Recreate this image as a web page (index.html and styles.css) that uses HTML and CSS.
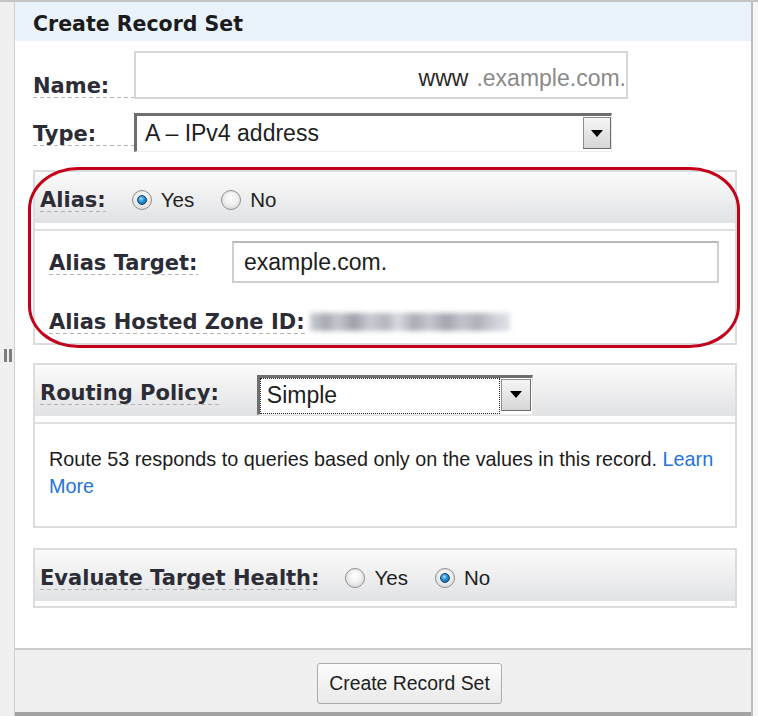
FILE: index.html
```html
<!DOCTYPE html>
<html>
<head>
<meta charset="utf-8">
<link rel="stylesheet" href="styles.css">
</head>
<body>
<div class="frame">
  <div class="gutter"><div class="grip"><span></span><span></span></div></div>
  <div class="panel">
    <div class="title">Create Record Set</div>
    <div class="main">
      <div class="field-row name-row">
        <span class="lbl">Name:</span>
        <div class="name-input"><span class="host">www</span><span class="suffix">.example.com.</span></div>
      </div>
      <div class="field-row type-row">
        <span class="lbl">Type:</span>
        <div class="select type-select"><span class="select-text">A – IPv4 address</span><span class="select-btn"><span class="arrow"></span></span></div>
      </div>

      <div class="sec alias-sec">
        <div class="sec-head">
          <span class="lbl">Alias:</span>
          <span class="radio checked"></span><span class="opt">Yes</span>
          <span class="radio"></span><span class="opt">No</span>
        </div>
        <div class="sec-body alias-body">
          <div class="target-row">
            <span class="lbl target-lbl">Alias Target:</span>
            <div class="target-input">example.com.</div>
          </div>
          <div class="zone-row">
            <span class="lbl">Alias Hosted Zone ID:</span>
            <span class="blur"></span>
          </div>
        </div>
        <div class="highlight"></div>
      </div>

      <div class="sec routing-sec">
        <div class="sec-head">
          <span class="lbl">Routing Policy:</span>
          <div class="select routing-select"><span class="select-text focus">Simple</span><span class="select-btn"><span class="arrow"></span></span></div>
        </div>
        <div class="sec-body routing-body">
          <p class="desc">Route 53 responds to queries based only on the values in this record. <a class="link" href="#">Learn</a> <a class="link" href="#">More</a></p>
        </div>
      </div>

      <div class="sec health-sec">
        <div class="sec-head">
          <span class="lbl">Evaluate Target Health:</span>
          <span class="radio"></span><span class="opt">Yes</span>
          <span class="radio checked"></span><span class="opt">No</span>
        </div>
        <div class="sec-tail"></div>
      </div>
    </div>
    <div class="footer"><button class="btn">Create Record Set</button></div>
  </div>
  <div class="edge"></div>
</div>
</body>
</html>
```

FILE: styles.css
```css
html, body {
  margin: 0;
  padding: 0;
}
body {
  background: #f2f2f2;
  font-family: "Liberation Sans", Arial, sans-serif;
  color: #222;
}
.frame {
  width: 758px;
  height: 716px;
  box-sizing: border-box;
  border-top: 2px solid #c4c4c4;
  display: flex;
  overflow: hidden;
}
.gutter {
  width: 14px;
  flex-shrink: 0;
  background: #f0f0f0;
  padding-top: 347px;
  box-sizing: border-box;
}
.grip {
  display: flex;
  gap: 2px;
  padding-left: 4px;
}
.grip span {
  width: 3px;
  height: 13px;
  background: #7d7d7d;
}
.panel {
  width: 739px;
  flex-shrink: 0;
  box-sizing: border-box;
  border-left: 1px solid #cfcfcf;
  border-right: 2px solid #bdbdbd;
  background: #fff;
  display: flex;
  flex-direction: column;
}
.edge {
  flex: 1;
  background: #f6f6f6;
}
.title {
  height: 39px;
  box-sizing: border-box;
  padding: 5px 0 0 18px;
  background: #eaf2fc;
  display: flex;
  align-items: center;
  font-family: "DejaVu Sans", Verdana, sans-serif;
  font-weight: bold;
  font-size: 20.5px;
  color: #1b1b1b;
}
.main {
  padding: 10px 0 0 18px;
}
.lbl {
  display: inline-block;
  font-family: "DejaVu Sans", Verdana, sans-serif;
  font-weight: bold;
  font-size: 21px;
  line-height: 23px;
  color: #2c2c36;
  background-image: repeating-linear-gradient(to right, #b4b4b4 0 4px, transparent 4px 7px);
  background-size: 100% 1px;
  background-position: left bottom;
  background-repeat: no-repeat;
  white-space: nowrap;
}
.field-row {
  display: grid;
  grid-template-columns: 101px auto;
}
.name-row {
  align-items: end;
}
.name-row .lbl {
  margin-bottom: 1px;
}
.name-input {
  width: 494px;
  height: 48px;
  box-sizing: border-box;
  border: 2px solid #d6d6d6;
  display: flex;
  justify-content: flex-end;
  align-items: center;
  padding: 6px 0 0 0;
  font-size: 23px;
}
.host {
  color: #2a2a2a;
}
.suffix {
  color: #8a8a8a;
  margin-left: 8px;
}
.type-row {
  margin-top: 14px;
  align-items: center;
}
.type-row .lbl {
  margin-top: 4px;
}
.select {
  display: flex;
  box-sizing: border-box;
  border-style: solid;
  border-width: 3px 1px 1px 3px;
  border-color: #6e6e6e #e8e8e8 #eeeeee #6e6e6e;
  background: #fff;
  height: 39px;
  font-size: 23px;
}
.type-select {
  width: 478px;
}
.select-text {
  flex: 1;
  display: flex;
  align-items: center;
  padding-left: 8px;
  color: #1e1e1e;
}
.select-btn {
  width: 28px;
  flex-shrink: 0;
  box-sizing: border-box;
  margin: 1px 0 2px 0;
  border: 1px solid #7a7a7a;
  border-color: #8c8c8c #6c6c6c #6c6c6c #8c8c8c;
  background: linear-gradient(#f6f6f6, #d6d6d6);
  display: flex;
  align-items: center;
  justify-content: center;
}
.arrow {
  width: 0;
  height: 0;
  border-left: 6px solid transparent;
  border-right: 6px solid transparent;
  border-top: 7px solid #000;
}
.sec {
  width: 704px;
  box-sizing: border-box;
  border: 2px solid #dcdcdc;
  position: relative;
}
.alias-sec {
  margin-top: 18px;
}
.routing-sec {
  margin-top: 18px;
}
.health-sec {
  margin-top: 20px;
}
.sec-head {
  height: 51px;
  box-sizing: border-box;
  padding: 5px 0 0 5px;
  background: linear-gradient(#fbfbfb, #e1e2e4);
  display: flex;
  align-items: center;
}
.sec-body {
  margin-top: 6px;
  border-top: 2px solid #e0e0e0;
}
.sec-tail {
  height: 5px;
}
.radio {
  width: 20px;
  height: 20px;
  box-sizing: border-box;
  border-radius: 50%;
  border: 1px solid #8e8e8e;
  background: radial-gradient(circle at 50% 40%, #ffffff 0%, #eeeeee 50%, #c4c4c4 100%);
  box-shadow: inset 0 0 0 1px #e8e8e8;
  margin-left: 26px;
  position: relative;
  flex-shrink: 0;
}
.opt + .radio {
  margin-left: 27px;
}
.radio.checked::after {
  content: "";
  position: absolute;
  left: 4px;
  top: 4px;
  width: 10px;
  height: 10px;
  box-sizing: border-box;
  border-radius: 50%;
  border: 1px solid #0c3f6e;
  background: radial-gradient(circle at 40% 35%, #a4e0ff 0%, #2a94da 40%, #0d5796 100%);
}
.opt {
  margin-left: 9px;
  font-size: 20.5px;
  color: #1e1e1e;
}
.alias-body {
  padding: 10px 0 9px 14px;
}
.target-row {
  display: flex;
  align-items: center;
}
.target-lbl {
  margin-top: 3px;
}
.target-input {
  margin-left: auto;
  margin-right: 16px;
  width: 487px;
  height: 42px;
  box-sizing: border-box;
  border: 2px solid #cfcfcf;
  border-top-color: #b9b9b9;
  padding-left: 10px;
  display: flex;
  align-items: center;
  font-size: 23px;
  color: #1e1e1e;
}
.zone-row {
  margin-top: 28px;
  display: flex;
  align-items: center;
}
.blur {
  display: inline-block;
  width: 200px;
  height: 18px;
  margin-left: 5px;
  margin-top: -2px;
  background:
    linear-gradient(to right, #c9ccd2 0%, #a7aab1 8%, #c4c7cd 14%, #9da0a8 22%, #c9ccd3 30%, #b3b6bd 38%, #d9dce1 44%, #a9acb4 52%, #c5c8ce 60%, #a2a5ad 68%, #c1c4cb 76%, #aeb1b8 84%, #cdd0d6 92%, #dfe2e7 100%);
  filter: blur(2.5px);
}
.highlight {
  position: absolute;
  left: -7px;
  top: -5px;
  right: -5px;
  bottom: -5px;
  border: 3px solid #c2001b;
  border-radius: 50px / 42px;
  pointer-events: none;
}
.routing-select {
  margin-left: 38px;
  width: 276px;
  height: 40px;
  margin-top: 3px;
}
.routing-select .select-text {
  padding-left: 6px;
  border: 1px dotted #222;
  margin: 0 1px 0 0;
}
.routing-select .select-btn {
  width: 30px;
  margin: 1px 1px 3px 0;
}
.routing-body {
  padding: 22px 10px 26px 14px;
}
.desc {
  margin: 0;
  font-size: 19.8px;
  line-height: 27px;
  color: #1c1c1c;
}
.link {
  color: #2274dc;
  text-decoration: none;
}
.footer {
  margin-top: auto;
  height: 68px;
  box-sizing: border-box;
  border-top: 2px solid #cdcdcd;
  border-bottom: 4px solid #a3a3a3;
  background: #f0f0f0;
  padding: 13px 0 0 302px;
}
.btn {
  width: 185px;
  height: 41px;
  box-sizing: border-box;
  border: 1px solid #ababab;
  border-radius: 3px;
  background: linear-gradient(#fdfdfd, #e9e9e9);
  font-family: "Liberation Sans", Arial, sans-serif;
  font-size: 19.4px;
  color: #1e1e1e;
  padding: 0;
}
```
